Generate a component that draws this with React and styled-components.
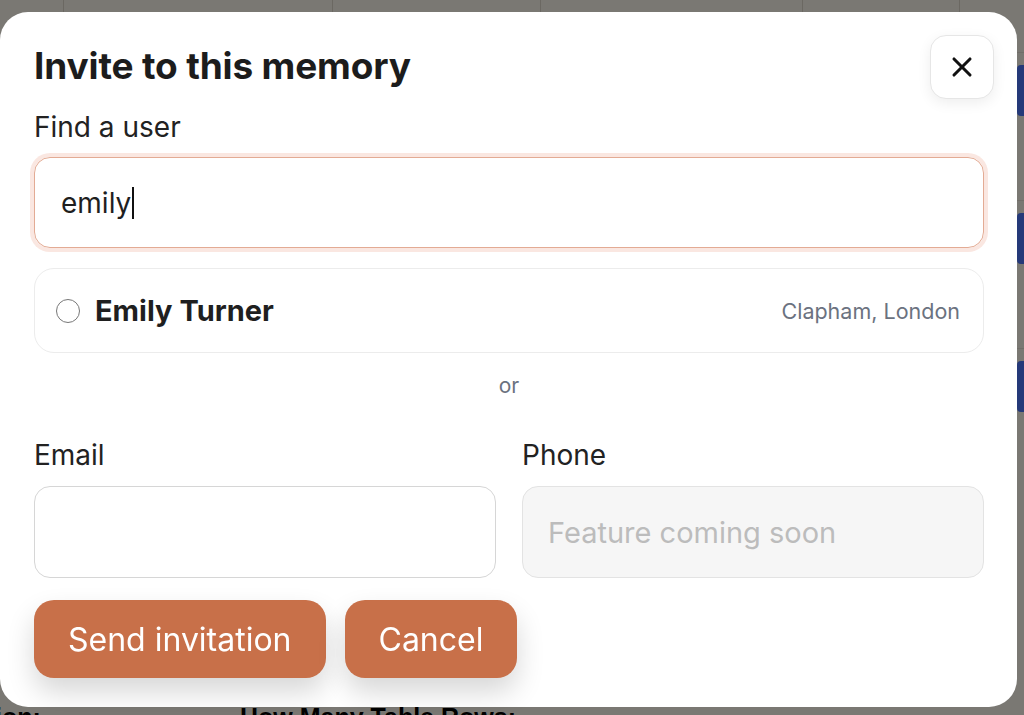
import styled, { createGlobalStyle } from 'styled-components'
import { X } from 'lucide-react'

const GlobalStyle = createGlobalStyle`
  html, body {
    margin: 0;
    padding: 0;
    height: 100%;
    overflow: hidden;
  }
  body {
    font-family: Inter, "Noto Sans", sans-serif;
    color: #1f1f1f;
  }
  * { box-sizing: border-box; }
`

/* the table page that sits under the dialog */
const Page = styled.div`
  height: 715px;
  display: flex;
  flex-direction: column;
  background: #f4f0e6;
`

const HeadStrip = styled.div`
  height: 12px;
  display: grid;
  grid-template-columns: 63px 269px 208px 262px 157px 1fr;
  div + div { border-left: 1px solid #d6d0c4; }
`

const Body = styled.div`
  flex: 1;
  display: flex;
`

const MainCol = styled.div`
  flex: 1;
`

const ActionCol = styled.div`
  width: 60px;
  margin-right: -53px;
  display: flex;
  flex-direction: column;
  padding-top: 40px;
`

const ActionRow = styled.div`
  height: 148px;
  border-top: 1px solid #e2ddd2;
  padding-top: 12px;
`

const ViewButton = styled.div`
  height: 51px;
  background: #4a72f2;
  border-radius: 4px 0 0 4px;
`

const FootRow = styled.div`
  height: 12px;
  display: flex;
  font: 700 25px/28px "Liberation Sans", Arial, sans-serif;
  color: #000;
  overflow: hidden;
  span:first-child {
    width: 288px;
    margin-left: -48px;
  }
`

/* dialog */
const Backdrop = styled.div`
  position: fixed;
  inset: 0;
  background: rgba(0, 0, 0, 0.5);
  display: flex;
  align-items: flex-start;
  padding: 12px 7px 0 0;
`

const Dialog = styled.div`
  position: relative;
  width: 1017px;
  height: 695px;
  background: #fff;
  border-radius: 28px;
  padding: 34px 33px 29px 34px;
  display: flex;
  flex-direction: column;
`

const Title = styled.h2`
  margin: 0;
  font-size: 37px;
  line-height: 40px;
  font-weight: 700;
  letter-spacing: -0.15px;
  color: #1c1c1c;
`

const CloseButton = styled.button`
  position: absolute;
  top: 23px;
  right: 23px;
  width: 64px;
  height: 64px;
  border-radius: 16px;
  border: 1px solid #e6e6e6;
  background: #fff;
  box-shadow: 0 4px 14px rgba(0, 0, 0, 0.07);
  display: flex;
  align-items: center;
  justify-content: center;
  color: #111;
  padding: 0;
`

const Label = styled.div`
  margin-top: ${p => p.$top || 0}px;
  font-size: 28px;
  line-height: 32px;
  color: #222;
`

const SearchBox = styled.div`
  margin-top: 14px;
  height: 91px;
  border: 1.5px solid #e3ab94;
  border-radius: 16px;
  box-shadow: 0 0 0 4px rgba(242, 196, 180, 0.4);
  display: flex;
  align-items: center;
  padding-left: 26px;
  font-size: 28px;
  color: #1f1f1f;
`

const Caret = styled.span`
  display: inline-block;
  width: 2px;
  height: 32px;
  background: #111;
  margin-left: 1px;
`

const ResultCard = styled.label`
  margin-top: 20px;
  height: 85px;
  border: 1px solid #ececec;
  border-radius: 20px;
  display: flex;
  align-items: center;
  padding: 0 23px 0 21px;
`

const Radio = styled.span`
  width: 24px;
  height: 24px;
  border-radius: 50%;
  border: 1.5px solid #777;
  background: #fff;
  flex-shrink: 0;
`

const UserName = styled.span`
  margin-left: 15px;
  font-size: 29px;
  font-weight: 700;
  color: #1f1f1f;
`

const UserPlace = styled.span`
  margin-left: auto;
  font-size: 21.5px;
  color: #6b7280;
`

const OrText = styled.div`
  margin-top: 21px;
  text-align: center;
  font-size: 21px;
  line-height: 24px;
  color: #6b7280;
`

const FieldRow = styled.div`
  display: grid;
  grid-template-columns: 1fr 1fr;
  column-gap: 26px;
`

const Field = styled.div`
  display: flex;
  flex-direction: column;
`

const TextInput = styled.input`
  margin-top: 15px;
  height: 92px;
  width: 100%;
  border-radius: 16px;
  border: 1px solid ${p => (p.disabled ? '#e3e3e3' : '#d6d6d6')};
  background: ${p => (p.disabled ? '#f6f6f6' : '#fff')};
  padding: 0 25px;
  font: 29px Inter, sans-serif;
  color: #1f1f1f;
  outline: none;
  &::placeholder { color: #bcbcbc; }
`

const Actions = styled.div`
  margin-top: 22px;
  display: flex;
  gap: 19px;
`

const Button = styled.button`
  height: 78px;
  padding: 0 34px;
  border: none;
  border-radius: 20px;
  background: #c87049;
  color: #fff;
  font: 32px Inter, sans-serif;
  box-shadow: 0 14px 28px rgba(0, 0, 0, 0.16);
`

export default function App() {
  return (
    <>
      <GlobalStyle />
      <Page>
        <HeadStrip>
          <div /><div /><div /><div /><div /><div />
        </HeadStrip>
        <Body>
          <MainCol />
          <ActionCol>
            {[0, 1, 2].map(i => (
              <ActionRow key={i}>
                <ViewButton />
              </ActionRow>
            ))}
          </ActionCol>
        </Body>
        <FootRow>
          <span>Option:</span>
          <span>How Many Table Rows:</span>
        </FootRow>
      </Page>

      <Backdrop>
        <Dialog role="dialog">
          <Title>Invite to this memory</Title>
          <CloseButton aria-label="Close">
            <X size={32} strokeWidth={2.3} />
          </CloseButton>

          <Label $top={25}>Find a user</Label>
          <SearchBox role="textbox">
            emily<Caret />
          </SearchBox>

          <ResultCard>
            <Radio />
            <UserName>Emily Turner</UserName>
            <UserPlace>Clapham, London</UserPlace>
          </ResultCard>

          <OrText>or</OrText>

          <FieldRow>
            <Field>
              <Label $top={41}>Email</Label>
              <TextInput type="email" />
            </Field>
            <Field>
              <Label $top={41}>Phone</Label>
              <TextInput placeholder="Feature coming soon" disabled />
            </Field>
          </FieldRow>

          <Actions>
            <Button>Send invitation</Button>
            <Button>Cancel</Button>
          </Actions>
        </Dialog>
      </Backdrop>
    </>
  )
}
